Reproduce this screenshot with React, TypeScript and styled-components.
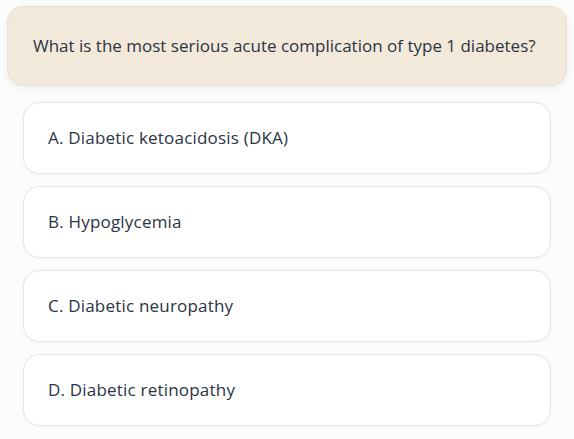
import React from 'react';
import styled, { createGlobalStyle } from 'styled-components';

const GlobalStyle = createGlobalStyle`
  body {
    margin: 0;
    background: #fbfcfc;
    font-family: 'Open Sans', 'Noto Sans', sans-serif;
  }
`;

const Page = styled.div`
  padding: 6px 7px;
`;

const QuestionCard = styled.div`
  background: #f2e9da;
  border: 1px solid #e8e0d0;
  border-radius: 16px;
  padding: 27px 25px;
  box-shadow: 0 2px 8px rgba(0, 0, 0, 0.06);
  color: #2b3444;
  font-size: 17px;
  line-height: 24px;
`;

const Options = styled.div`
  display: flex;
  flex-direction: column;
  gap: 12px;
  margin-top: 16px;
  padding: 0 16px;
`;

const Option = styled.button`
  text-align: left;
  font: inherit;
  font-size: 17px;
  line-height: 24px;
  letter-spacing: 0.2px;
  color: #2b3444;
  background: #fff;
  border: 1px solid #e1e7e7;
  border-radius: 16px;
  padding: 23px 24px;
  box-shadow: 0 1px 3px rgba(0, 0, 0, 0.03);
  cursor: pointer;
`;

const options = [
  'A. Diabetic ketoacidosis (DKA)',
  'B. Hypoglycemia',
  'C. Diabetic neuropathy',
  'D. Diabetic retinopathy',
];

const App: React.FC = () => {
  return (
    <>
      <GlobalStyle />
      <Page>
        <QuestionCard>
          What is the most serious acute complication of type 1 diabetes?
        </QuestionCard>
        <Options>
          {options.map((o) => (
            <Option key={o}>{o}</Option>
          ))}
        </Options>
      </Page>
    </>
  );
};

export default App;
